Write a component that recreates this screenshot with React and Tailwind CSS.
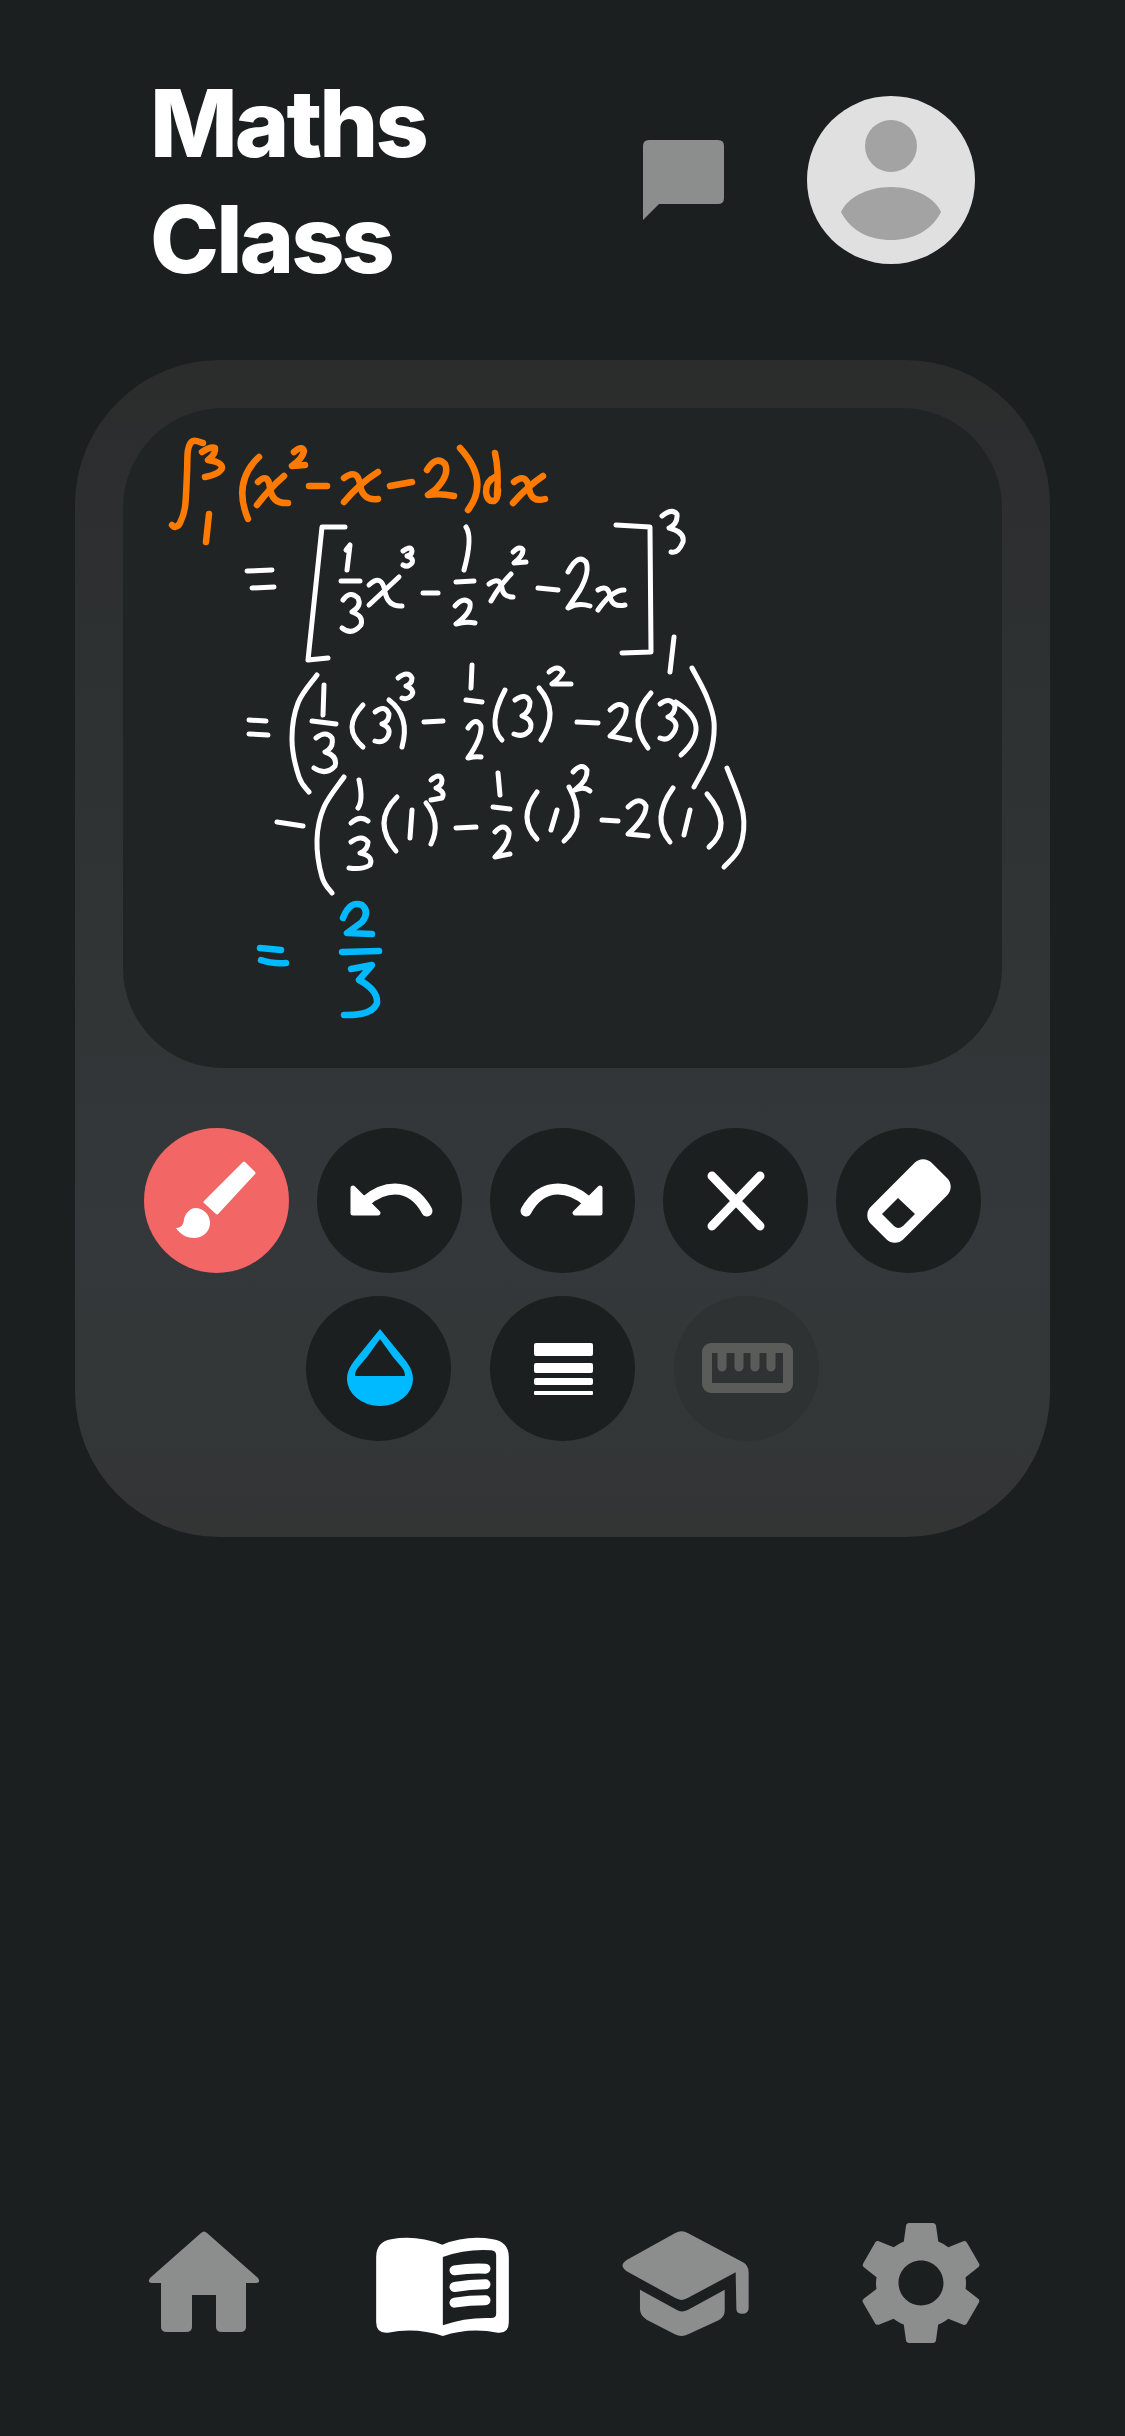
//components/App.jsx

import { MdSettings } from 'react-icons/md'

// Smooth curve through sampled points, handwriting strokes stay round this way
function through(pts) {
  // 3 samples = one bracket bow, a single quadratic keeps it from looking like a chevron
  if (pts.length === 3) {
    const [a, m, b] = pts
    const cx = 2 * m[0] - (a[0] + b[0]) / 2
    const cy = 2 * m[1] - (a[1] + b[1]) / 2
    return `M${a[0]} ${a[1]} Q${cx} ${cy} ${b[0]} ${b[1]}`
  }

  let d = `M${pts[0][0]} ${pts[0][1]}`
  for (let i = 0; i < pts.length - 1; i++) {
    const p0 = pts[i - 1] || pts[i]
    const p1 = pts[i]
    const p2 = pts[i + 1]
    const p3 = pts[i + 2] || p2
    const c1x = p1[0] + (p2[0] - p0[0]) / 6
    const c1y = p1[1] + (p2[1] - p0[1]) / 6
    const c2x = p2[0] - (p3[0] - p1[0]) / 6
    const c2y = p2[1] - (p3[1] - p1[1]) / 6
    d += ` C${c1x} ${c1y} ${c2x} ${c2y} ${p2[0]} ${p2[1]}`
  }
  return d
}

// Ink on the board, coordinates are page pixels (see viewBox on the svg)
const ORANGE_INK = [
  [[172, 525], [175, 527], [180, 523], [185, 507], [187, 473], [188, 450], [193, 441], [203, 443]],
  'M202 452 Q211 446 215 448 Q216 454 208 460 Q222 462 222 468 Q220 474 205 477',
  'M209 514 L206 542',
  [[259, 457], [243, 485], [248, 519]],
  'M258 482 Q268 472 270 488 Q272 504 288 503',
  'M284 476 Q270 488 257 505',
  'M294 452 Q302 445 304 451 Q303 458 292 466 L305 465',
  'M309 486 L327 486',
  'M344 478 Q357 468 360 484 Q362 501 378 499',
  'M378 472 Q360 483 344 502',
  'M390 486 L412 482',
  'M427 470 Q436 455 445 464 Q450 475 435 490 L428 495 Q440 493 454 496',
  [[460, 448], [477, 480], [468, 510]],
  'M495 453 Q499 470 497 495',
  'M495 477 Q486 481 486 492 Q487 502 494 501 Q498 499 498 490',
  'M514 482 Q526 472 529 488 Q531 503 545 499',
  'M543 476 Q528 486 513 503',
]

const WHITE_INK = [
  // = [ 1/3 x^3 - 1/2 x^2 - 2x ]
  'M247 571 L272 570',
  'M252 588 L274 587',
  'M345 527 L322 527 L308 660 L328 658',
  'M346 550 L350 545 L347 570',
  'M341 581 L360 581',
  'M343 600 Q350 590 358 598 Q362 606 352 612 Q364 616 361 625 Q352 636 342 628',
  'M369 585 Q382 573 385 592 Q388 607 402 606',
  'M399 577 Q385 590 369 605',
  'M403 551 Q411 545 412 551 Q412 555 407 556 Q414 558 412 563 Q408 568 403 565',
  'M423 593 L438 593',
  [[466, 527], [469, 543], [464, 570]],
  'M456 582 L474 581',
  'M455 606 Q464 596 470 603 Q472 612 456 624 Q466 621 475 623',
  'M489 584 Q500 576 502 588 Q503 597 513 597',
  'M511 574 Q500 585 491 601',
  'M513 552 Q520 545 523 550 Q523 556 514 563 L526 562',
  'M538 588 L558 590',
  'M568 572 Q578 553 586 562 Q590 572 580 590 L568 608 Q578 602 590 606',
  'M598 590 Q608 584 610 596 Q612 608 625 605',
  'M624 590 Q612 590 598 610',
  'M616 525 L650 527 L651 652 L622 653',
  'M662 516 Q672 508 677 514 Q678 524 669 528 Q685 532 683 542 Q678 554 671 552',
  'M674 637 L670 672',

  // = (1/3 (3)^3 - 1/2 (3)^2 - 2(3))
  'M249 720 L266 721',
  'M249 734 L268 735',
  [[317, 675], [298, 703], [292, 740], [299, 777], [309, 792]],
  'M324 685 L323 715',
  'M312 721 L336 724',
  'M316 738 Q326 730 332 738 Q334 748 325 752 Q338 756 335 766 Q326 776 314 768',
  [[363, 705], [352, 727], [363, 747]],
  'M375 712 Q385 704 389 714 Q389 722 382 724 Q392 728 388 736 Q384 744 375 741',
  [[389, 700], [403, 720], [402, 747]],
  'M398 678 Q408 670 412 678 Q412 684 406 686 Q416 690 411 696 Q407 700 402 698',
  'M424 722 L443 721',
  'M472 665 L471 688',
  'M466 700 L482 702',
  'M468 728 Q476 716 481 726 Q482 738 468 758 Q476 756 481 757',
  [[505, 690], [495, 720], [502, 740]],
  'M515 700 Q526 692 530 702 Q530 712 522 716 Q534 720 530 730 Q524 738 514 734',
  [[539, 688], [550, 713], [541, 740]],
  'M549 672 Q558 664 563 672 Q560 678 552 684 L571 684',
  'M577 722 L598 723',
  'M610 710 Q620 700 626 708 Q628 720 610 736 Q620 738 630 740',
  [[651, 693], [638, 720], [648, 748]],
  'M660 704 Q670 696 675 706 Q675 714 668 717 Q680 722 674 732 Q668 742 660 738',
  [[676, 702], [696, 727], [681, 755]],
  [[692, 668], [706, 695], [714, 722], [710, 755], [694, 787]],

  // - (1/3 (1)^3 - 1/2 (1)^2 - 2(1))
  'M277 822 L303 826',
  [[344, 777], [324, 807], [317, 840], [322, 877], [332, 893]],
  [[359, 780], [361, 797], [358, 808]],
  'M351 823 Q360 815 368 821',
  'M351 842 Q362 834 368 842 Q368 850 360 853 Q374 856 370 865 Q362 870 349 868',
  [[397, 797], [384, 823], [396, 851]],
  'M412 810 L410 838',
  [[426, 803], [435, 823], [431, 844]],
  'M431 780 Q440 772 442 780 Q442 786 436 788 Q446 792 442 798 L431 800',
  'M456 828 L476 827',
  'M498 773 L500 795',
  'M493 807 L510 809',
  'M495 832 Q504 822 509 832 Q510 842 495 857 L510 854',
  [[537, 792], [527, 817], [537, 839]],
  'M557 810 L551 830',
  [[569, 787], [577, 817], [564, 841]],
  'M573 772 Q582 762 587 770 Q588 780 575 790 Q584 786 590 791',
  'M602 820 L618 821',
  'M628 807 Q640 795 646 806 Q646 818 628 834 L648 836',
  [[673, 788], [661, 817], [670, 842]],
  'M690 810 L684 835',
  [[707, 794], [721, 823], [709, 847]],
  [[727, 768], [743, 813], [740, 847], [724, 867]],
]

const BLUE_INK = [
  'M260 948 L281 950',
  'M261 960 Q272 964 286 963',
  'M343 918 Q350 900 362 905 Q370 912 362 922 L347 933 L372 934',
  'M342 952 L379 951',
  'M351 969 L372 965 L359 980 Q378 990 377 1003 Q372 1016 344 1015',
]

function Ink({ strokes, color, width }) {
  return (
    <g fill="none" stroke={color} strokeWidth={width} strokeLinecap="round" strokeLinejoin="round">
      {strokes.map((s, i) => (
        <path key={i} d={typeof s === 'string' ? s : through(s)} />
      ))}
    </g>
  )
}

function ToolButton({ className, children }) {
  return (
    <div className={`size-[145px] rounded-full flex items-center justify-center ${className}`}>
      <svg viewBox="0 0 144 144" className="size-[144px]">
        {children}
      </svg>
    </div>
  )
}

const UNDO = (
  <g fill="#fff" stroke="#fff" strokeLinejoin="round">
    <path d="M35 59 L60 84 L35 84 Z" strokeWidth="5" />
    <path d="M48 72 Q62 60 77 60 Q97 60 109 82" fill="none" strokeWidth="11" strokeLinecap="round" />
  </g>
)

export default function App() {
  return (
    <div className="w-[1125px] h-[2436px] overflow-hidden bg-[#1c1f20] font-['Inter',sans-serif]">
      {/* Header */}
      <header className="h-[360px] flex items-start justify-between pl-[150px] pr-[150px]">
        <h1 className="pt-[65px] text-[93px] leading-[116px] font-extrabold text-white tracking-[-3px]">
          Maths
          <br />
          Class
        </h1>
        <div className="mt-[96px] flex items-center gap-[83px]">
          <svg viewBox="0 0 81 80" className="w-[81px] h-[80px]">
            <path d="M6 0 H75 Q81 0 81 6 V58 Q81 64 75 64 H16 L0 80 V6 Q0 0 6 0 Z" fill="#8c8e8d" />
          </svg>
          <div className="size-[168px] rounded-full bg-[#e0e0e0]">
            <svg viewBox="0 0 168 168" className="size-[168px]">
              <circle cx="84" cy="50" r="26" fill="#a3a3a3" />
              <path d="M34 116 C40 102 60 91 84 91 C108 91 128 102 134 116 C124 135 106 144 84 144 C62 144 44 135 34 116 Z" fill="#a3a3a3" />
            </svg>
          </div>
        </div>
      </header>

      {/* Board + tools */}
      <section className="mx-[75px] h-[1177px] p-[48px] rounded-[145px] bg-linear-to-b from-[#2b2d2d] via-[#34383a] via-75% to-[#333535]">
        <div className="h-[660px] rounded-[100px] bg-[#202425]">
          <svg
            viewBox="123 408 879 660"
            className="w-[879px] h-[660px]"
            role="img"
            aria-label="Handwritten working of the integral from 1 to 3 of x squared minus x minus 2, equal to 2/3"
          >
            <Ink strokes={ORANGE_INK} color="#ff7a00" width="6.5" />
            <Ink strokes={WHITE_INK} color="#ffffff" width="5" />
            <Ink strokes={BLUE_INK} color="#00b9ff" width="6.5" />
          </svg>
        </div>

        <div className="mt-[60px] flex justify-center gap-[28px]">
          <ToolButton className="bg-[#f26665]">
            <path d="M99 34 L109 44 L72 84 L60 73 Z" fill="#fff" stroke="#fff" strokeWidth="3" strokeLinejoin="round" />
            <path d="M31 99 C37 99 39 94 39 90 C41 83 46 79 50 79 C59 79 65 86 65 94 C65 103 57 109 49 109 C41 109 35 105 31 99 Z" fill="#fff" />
          </ToolButton>
          <ToolButton className="bg-[#1c1f20]">{UNDO}</ToolButton>
          <ToolButton className="bg-[#1c1f20]">
            <g transform="translate(144 0) scale(-1 1)">{UNDO}</g>
          </ToolButton>
          <ToolButton className="bg-[#1c1f20]">
            <path d="M48 47 L96 97 M96 47 L48 97" stroke="#fff" strokeWidth="9" strokeLinecap="round" fill="none" />
          </ToolButton>
          <ToolButton className="bg-[#1c1f20]">
            <rect x="29" y="49" width="86" height="46" rx="12" transform="rotate(-45 72 72)" fill="#fff" />
            <path d="M61 69 L78 85 L66 97 Q61 101 57 97 L45 85 Z" fill="#1c1f20" />
          </ToolButton>
        </div>

        <div className="mt-[23px] flex justify-center gap-[39px]">
          <ToolButton className="bg-[#1c1f20]">
            <path d="M73 32 L56 53 C46 65 40 72 40 82 A33 27 0 0 0 106 82 C106 72 100 65 90 53 Z" fill="#00baff" />
            <path d="M73 42 L60 60 C53 69 48 72 48 79 L98 79 C98 72 93 69 86 60 Z" fill="#1c1f20" />
          </ToolButton>
          <ToolButton className="bg-[#1c1f20]">
            <g fill="#fff">
              <rect x="43" y="46" width="59" height="13" rx="2" />
              <rect x="43" y="66" width="59" height="10" rx="2" />
              <rect x="43" y="81" width="59" height="7" rx="2" />
              <rect x="43" y="94" width="59" height="4" rx="1" />
            </g>
          </ToolButton>
          <ToolButton className="bg-[#2f3232]">
            <rect x="32" y="51" width="81" height="40" rx="4" fill="none" stroke="#5a5c5a" strokeWidth="10" />
            <path d="M47 55 V70 M64 55 V70 M80 55 V70 M96 55 V70" stroke="#5a5c5a" strokeWidth="9" strokeLinecap="round" fill="none" />
          </ToolButton>
        </div>
      </section>

      {/* Bottom nav */}
      <nav className="mt-[686px] h-[120px] pl-[148px] pr-[145px] flex items-center justify-between">
        <svg viewBox="0 0 112 101" className="w-[112px] h-[101px] -mt-[3px]">
          <path
            d="M53 2 Q56 -1 59 2 L110 47 Q113 52 108 52 L98 52 L98 96 Q98 101 92 101 L74 101 Q68 101 68 96 L68 64 L44 64 L44 96 Q44 101 38 101 L19 101 Q13 101 13 96 L13 52 L4 52 Q-1 52 2 47 Z"
            fill="#8c8e8d"
          />
        </svg>
        <svg viewBox="50 55 398 297" className="w-[133px] h-[99px] mt-[7px] ml-[3px]">
          <path
            d="M50 115 Q50 70 95 62 Q170 48 248 78 Q325 48 400 62 Q448 70 448 115 L448 310 Q448 345 415 342 Q330 325 250 352 Q170 325 85 342 Q50 345 50 310 Z"
            fill="#fff"
          />
          <path d="M250 115 Q320 90 395 95 Q410 97 410 110 L410 285 Q410 298 395 298 Q320 295 250 320 Z" fill="#1c1f20" />
          <path
            d="M285 155 Q330 148 378 150 M285 205 Q330 198 378 197 M285 252 Q330 245 378 245"
            fill="none"
            stroke="#fff"
            strokeWidth="30"
            strokeLinecap="round"
          />
        </svg>
        <svg viewBox="787 28 380 322" className="w-[127px] h-[107px]">
          <g fill="#8c8e8d">
            <path d="M945 38 Q965 25 985 38 L1150 125 Q1167 135 1167 155 L1167 265 Q1165 280 1148 280 Q1130 280 1130 265 L1128 155 L985 232 Q965 245 945 232 L800 152 Q775 135 800 118 Z" />
            <path d="M840 208 L950 268 Q965 278 985 268 L1095 208 L1095 270 Q1095 290 1075 300 L985 342 Q965 352 945 342 L860 298 Q840 285 840 265 Z" />
          </g>
        </svg>
        <div className="w-[118px] h-[120px] flex items-center justify-center">
          <MdSettings className="shrink-0 text-[150px] text-[#8c8e8d]" />
        </div>
      </nav>
    </div>
  )
}
